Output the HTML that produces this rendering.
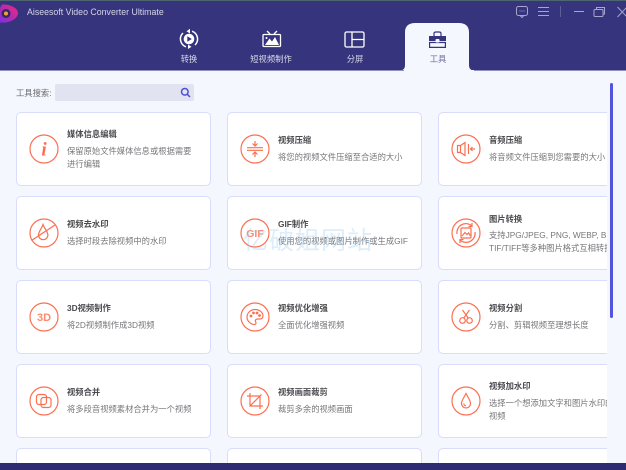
<!DOCTYPE html>
<html><head><meta charset="utf-8">
<style>
html,body{margin:0;padding:0;width:626px;height:470px;overflow:hidden;background:#f4f7fd;font-family:"Liberation Sans","Noto Sans CJK SC",sans-serif}
.abs{position:absolute}
#hdr{left:0;top:0;width:626px;height:70px;background:#36347c}
#strip{left:0;top:0;width:626px;height:1px;background:#4e6670}
#bot{left:0;top:463px;width:626px;height:7px;background:#2e2b72}
#title{left:27px;top:6px;font-size:8.8px;line-height:12px;color:#d4d5e8;white-space:nowrap}
.tl{font-size:8.3px;line-height:12px;color:#d8d9ea;text-align:center;white-space:nowrap}
#clip{left:0;top:71px;width:607px;height:392px;overflow:hidden}
.card{position:absolute;width:193px;height:72px;background:#fff;border:1px solid #d9dcfb;border-radius:5px;overflow:hidden}
.c3{width:168px;border-right:none;border-radius:5px 0 0 5px}
.last{height:14px;border-bottom:none;border-radius:5px 5px 0 0}
.card svg{position:absolute;left:12px;top:21px;width:30px;height:30px;fill:none;stroke:#fb6f51;stroke-width:1.200}
.t{position:absolute;left:50px;font-size:8.3px;line-height:12px;font-weight:bold;color:#4c4c50;white-space:nowrap}
.d{position:absolute;left:50px;font-size:8.3px;line-height:12.500px;color:#77777b;white-space:nowrap}
</style></head><body>
<div class="abs" id="hdr"></div>
<div class="abs" id="strip"></div>
<svg class="abs" style="left:0;top:3px" width="20" height="22" viewBox="0 0 20 22">
<defs><linearGradient id="g" x1="1" y1="0" x2="0" y2="1"><stop offset="0" stop-color="#f4267a"/><stop offset="1" stop-color="#7a30e0"/></linearGradient></defs>
<path d="M2 1.500C10 1 18 5 18 10C18 16 9 20.500 0 19.500V16C0 16 0 6 0 5Z" fill="url(#g)"/>
<circle cx="6" cy="10.500" r="4.500" fill="#36285f"/><circle cx="6" cy="10.500" r="2" fill="#f2a23a"/></svg>
<div class="abs" id="title">Aiseesoft Video Converter Ultimate</div>

<svg class="abs" style="left:515px;top:5px" width="111" height="14" viewBox="0 0 111 14" fill="none" stroke="#a5a6cd" stroke-width="1">
<rect x="1.500" y="1.500" width="11" height="9" rx="2"/><path d="M5 10.500L7 12.500L9 10.500"/><path d="M4.500 6h1M6.500 6h1M8.500 6h1"/>
<path d="M23 2.500h11M23 6.500h11M23 10.500h11"/>
<path d="M45.500 1v11" stroke="#5f5f98"/>
<path d="M59 6.500h10"/>
<rect x="79" y="4.500" width="9" height="7" rx="1"/><path d="M81.500 4.500V2.500h8v6.500h-1.500"/>
<path d="M102.500 2L112 12M112 2L102.500 12"/></svg>

<svg class="abs" style="left:179px;top:28px" width="20" height="22" viewBox="0 0 20 22" fill="none" stroke="#fff">
<path d="M4 5A8.300 8.300 0 0 0 7 18.800" stroke-width="1.500"/><path d="M16 17A8.300 8.300 0 0 0 13 3.200" stroke-width="1.500"/>
<path d="M11 .8L7.500 3.200L11 5.500Z" fill="#fff" stroke="none"/><path d="M9 16.500L12.500 18.800L9 21Z" fill="#fff" stroke="none"/>
<circle cx="10" cy="11" r="5.300" fill="#fff" stroke="none"/><path d="M8.300 8.300V13.700L12.800 11Z" fill="#36347c" stroke="none"/></svg>
<div class="abs tl" style="left:169px;top:53px;width:40px">转换</div>

<svg class="abs" style="left:262px;top:30px" width="20" height="18" viewBox="0 0 20 18" fill="none" stroke="#fff" stroke-width="1.300">
<path d="M5 1L8 4M15 1L12 4"/><rect x="1" y="4.500" width="17.500" height="12" rx="1"/>
<path d="M3 15L7.500 8.500L10 11.500L13 7L17 15Z" fill="#fff" stroke="none"/><circle cx="4.500" cy="8" r="1" fill="#fff" stroke="none"/></svg>
<div class="abs tl" style="left:241px;top:53px;width:60px">短视频制作</div>

<svg class="abs" style="left:344px;top:31px" width="21" height="17" viewBox="0 0 21 17" fill="none" stroke="#fff" stroke-width="1.300">
<rect x="1" y="1" width="19" height="15" rx="1.500"/><path d="M8 1V16M8 8.500H20"/></svg>
<div class="abs tl" style="left:335px;top:53px;width:40px">分屏</div>

<svg class="abs" style="left:399px;top:22px" width="80" height="49" viewBox="0 0 80 49">
<path d="M0 49V48.500C4 48.500 6 47 6 43V10C6 4 10 1 16 1H60C66 1 70 4 70 10V43C70 47 72 48.500 76 48.500V49Z" fill="#f4f7fd"/></svg>
<div class="abs" style="left:0;top:70px;width:404px;height:1px;background:#8f90c0"></div>
<div class="abs" style="left:474px;top:70px;width:152px;height:1px;background:#8f90c0"></div>
<svg class="abs" style="left:428px;top:31px" width="19" height="18" viewBox="0 0 19 18">
<path d="M6 5V2.500C6 1.500 7 1 8 1H11C12 1 13 1.500 13 2.500V5" fill="none" stroke="#36347c" stroke-width="1.200"/>
<rect x="1" y="5" width="17" height="5" fill="#36347c"/>
<path d="M1.600 11.500H17.400V16.400H1.600Z" fill="none" stroke="#36347c" stroke-width="1.200"/>
<rect x="7.500" y="8" width="4" height="3.500" rx="1" fill="#f4f7fd"/></svg>
<div class="abs tl" style="left:418px;top:53px;width:40px;color:#6b6a9e">工具</div>

<div class="abs" style="left:16px;top:87px;font-size:8.300px;line-height:12px;color:#6b6b70;white-space:nowrap">工具搜索:</div>
<div class="abs" style="left:55px;top:84px;width:139px;height:17px;background:#e1e3f0;border-radius:2px"></div>
<svg class="abs" style="left:180px;top:87px" width="11" height="11" viewBox="0 0 11 11" fill="none" stroke="#4c50d8" stroke-width="1.500"><circle cx="4.800" cy="4.800" r="3.300"/><path d="M7.300 7.300L10 10"/></svg>

<div class="abs" id="clip">
<!-- row 1 -->
<div class="card" style="left:16px;top:41px"><svg viewBox="0 0 30 30"><circle cx="15" cy="15" r="14"/><text x="15" y="21.500" text-anchor="middle" font-family="Liberation Serif" font-style="italic" font-weight="bold" font-size="19" fill="#fb6f51" stroke="none">i</text></svg><div class="t" style="top:15px">媒体信息编辑</div><div class="d" style="top:32px">保留原始文件媒体信息或根据需要<br>进行编辑</div></div>
<div class="card" style="left:227px;top:41px"><svg viewBox="0 0 30 30"><circle cx="15" cy="15" r="14"/><path d="M7 13.700H23M7 16.300H23M15 7V11.500M12.500 9.500L15 12L17.500 9.500M15 23V18.500M12.500 20.500L15 18L17.500 20.500"/></svg><div class="t" style="top:21px">视频压缩</div><div class="d" style="top:38px">将您的视频文件压缩至合适的大小</div></div>
<div class="card c3" style="left:438px;top:41px"><svg viewBox="0 0 30 30"><circle cx="15" cy="15" r="14"/><path d="M6.500 11.500H9.500V18.500H6.500ZM9.500 11.500L14 8.500V21.500L9.500 18.500ZM17.500 10V20M24 15H19.500M21.500 13L19.500 15L21.500 17"/></svg><div class="t" style="top:21px">音频压缩</div><div class="d" style="top:38px">将音频文件压缩到您需要的大小</div></div>
<!-- row 2 -->
<div class="card" style="left:16px;top:125px"><svg viewBox="0 0 30 30"><circle cx="15" cy="15" r="14"/><path d="M14 6.500C12.500 11 9.500 13.500 9.500 17A4.700 4.700 0 0 0 18.900 17C18.900 13.500 15.500 11 14 6.500Z"/><path d="M2.500 22.500L26 7"/></svg><div class="t" style="top:21px">视频去水印</div><div class="d" style="top:38px">选择时段去除视频中的水印</div></div>
<div class="card" style="left:227px;top:125px"><svg viewBox="0 0 30 30"><circle cx="15" cy="15" r="14"/><text x="15" y="19" text-anchor="middle" font-family="Liberation Sans" font-weight="bold" font-size="10.500" fill="#fb8a70" stroke="none">GIF</text></svg><div class="t" style="top:21px">GIF制作</div><div class="d" style="top:38px">使用您的视频或图片制作或生成GIF</div></div>
<div class="card c3" style="left:438px;top:125px"><svg viewBox="0 0 30 30"><circle cx="15" cy="15" r="14"/><rect x="10" y="10" width="10" height="10" rx="1"/><path d="M11 18L14 14.500L16 16.500L17.500 15L19.500 18"/><path d="M6 16A9 9 0 0 1 21 8M24 14A9 9 0 0 1 9 22M21 5V8.500H17.500M9 25V21.500H12.500"/></svg><div class="t" style="top:16px">图片转换</div><div class="d" style="top:32px">支持JPG/JPEG, PNG, WEBP, BMP,<br>TIF/TIFF等多种图片格式互相转换</div></div>
<!-- row 3 -->
<div class="card" style="left:16px;top:209px"><svg viewBox="0 0 30 30"><circle cx="15" cy="15" r="14"/><text x="15" y="19" text-anchor="middle" font-family="Liberation Sans" font-weight="bold" font-size="11" fill="#fb8a70" stroke="none">3D</text></svg><div class="t" style="top:21px">3D视频制作</div><div class="d" style="top:38px">将2D视频制作成3D视频</div></div>
<div class="card" style="left:227px;top:209px"><svg viewBox="0 0 30 30"><circle cx="15" cy="15" r="14"/><path d="M15 7.500C10.500 7.500 7 11 7 15C7 19 10.500 22.500 14.500 22.500C16.500 22.500 16 20.500 15.500 19.500C15 18 16 17 17.500 17H20C21.800 17 23 15.800 23 14C23 10.500 19.500 7.500 15 7.500Z"/><circle cx="11" cy="14" r=".8" fill="#fb6f51"/><circle cx="13.500" cy="11" r=".8" fill="#fb6f51"/><circle cx="17" cy="11" r=".8" fill="#fb6f51"/><circle cx="19.500" cy="13.500" r=".8" fill="#fb6f51"/></svg><div class="t" style="top:21px">视频优化增强</div><div class="d" style="top:38px">全面优化增强视频</div></div>
<div class="card c3" style="left:438px;top:209px"><svg viewBox="0 0 30 30"><circle cx="15" cy="15" r="14"/><circle cx="11.500" cy="18.500" r="2.800"/><circle cx="18.500" cy="18.500" r="2.800"/><path d="M12.800 16L18.500 8M17.200 16L11.500 8"/></svg><div class="t" style="top:21px">视频分割</div><div class="d" style="top:38px">分割、剪辑视频至理想长度</div></div>
<!-- row 4 -->
<div class="card" style="left:16px;top:293px"><svg viewBox="0 0 30 30"><circle cx="15" cy="15" r="14"/><rect x="7.500" y="8.500" width="10" height="10" rx="2.500"/><rect x="12" y="11.500" width="10" height="10" rx="2.500"/></svg><div class="t" style="top:21px">视频合并</div><div class="d" style="top:38px">将多段音视频素材合并为一个视频</div></div>
<div class="card" style="left:227px;top:293px"><svg viewBox="0 0 30 30"><circle cx="15" cy="15" r="14"/><path d="M10 7V20H23M7 10H20V23M10 20L21.500 8.500"/></svg><div class="t" style="top:21px">视频画面裁剪</div><div class="d" style="top:38px">裁剪多余的视频画面</div></div>
<div class="card c3" style="left:438px;top:293px"><svg viewBox="0 0 30 30"><circle cx="15" cy="15" r="14"/><path d="M15 7.500C13 11.500 10.500 14.500 10.500 17.500A4.500 4.500 0 0 0 19.500 17.500C19.500 14.500 17 11.500 15 7.500Z"/><path d="M12.800 17.500A2.200 2.200 0 0 0 15 19.700"/></svg><div class="t" style="top:15px">视频加水印</div><div class="d" style="top:32px">选择一个想添加文字和图片水印的<br>视频</div></div>
<!-- row 5 -->
<div class="card last" style="left:16px;top:377px"></div>
<div class="card last" style="left:227px;top:377px"></div>
<div class="card last c3" style="left:438px;top:377px;border-radius:5px 0 0 0"></div>
</div>

<div class="abs" style="left:243px;top:226px;font-size:25px;line-height:30px;letter-spacing:1px;color:rgba(150,200,235,.32);white-space:nowrap">亿破姐网站</div>
<div class="abs" style="left:610px;top:83px;width:3px;height:235px;background:#5355dc;border-radius:2px"></div>
<div class="abs" id="bot"></div>
</body></html>
